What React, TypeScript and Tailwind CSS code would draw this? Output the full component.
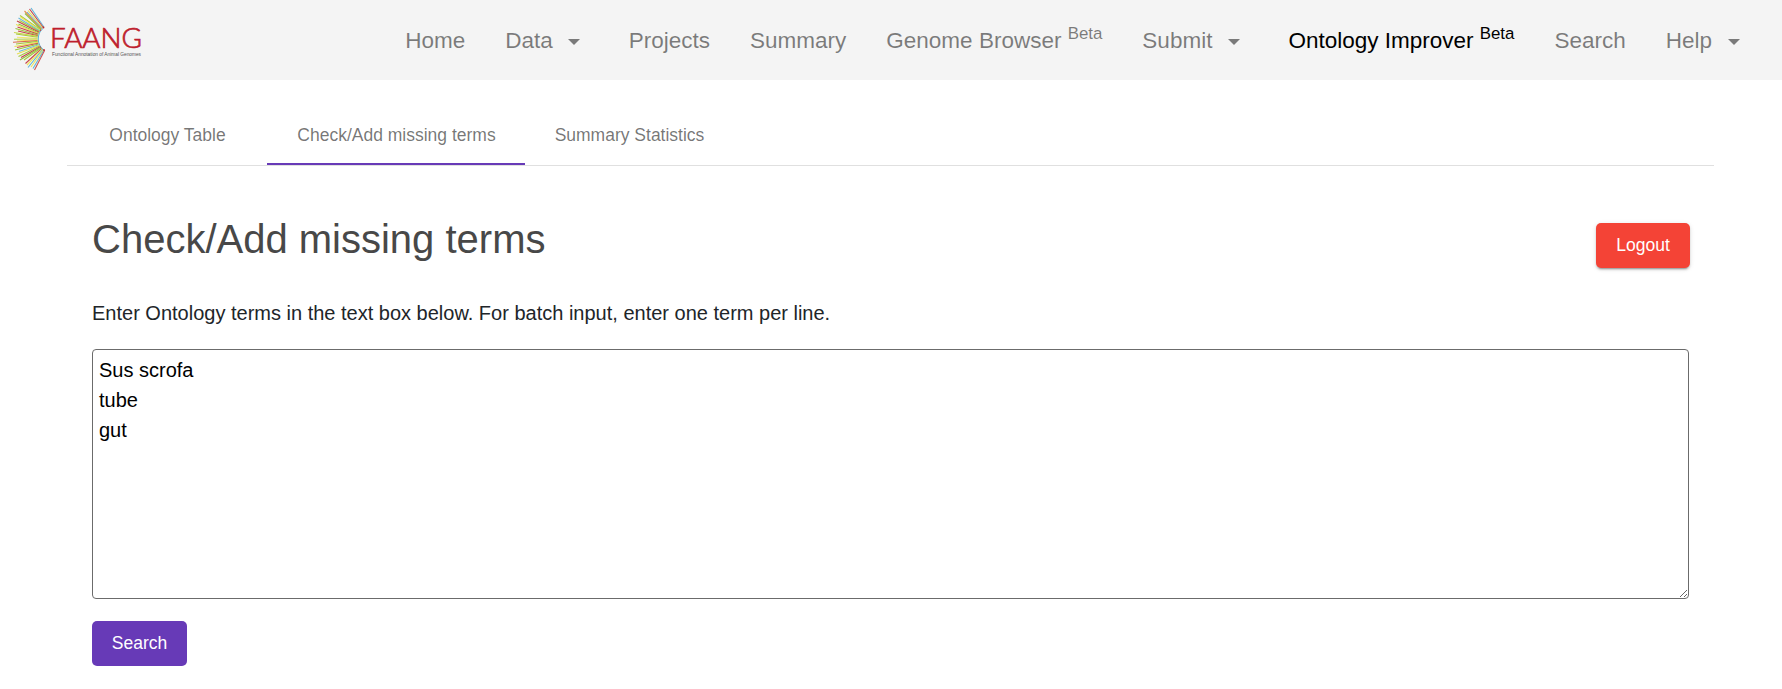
import React from "react";

type NavEntry = { label: string; beta?: boolean; menu?: boolean; active?: boolean };

const NAV: NavEntry[] = [
  { label: "Home" },
  { label: "Data", menu: true },
  { label: "Projects" },
  { label: "Summary" },
  { label: "Genome Browser", beta: true },
  { label: "Submit", menu: true },
  { label: "Ontology Improver", beta: true, active: true },
  { label: "Search" },
  { label: "Help", menu: true },
];

// Each ray: inner point, outer point, colour.
const RAYS: [number, number, number, number, string][] = [
  [44, 27.2, 31, 8, "#62b5d9"],
  [43.2, 27.5, 29.5, 9, "#c6434a"],
  [42.6, 28, 28, 10.5, "#e9e04f"],
  [42, 28.5, 27, 12, "#62b5d9"],
  [41.4, 29, 24.5, 11, "#e58c4f"],
  [41, 29.5, 25, 13.5, "#8fbf3f"],
  [40.8, 30, 20, 15.5, "#a5c93d"],
  [40.4, 30.5, 20.5, 17, "#f0e458"],
  [40, 31, 18.5, 18, "#6fb9dc"],
  [39.6, 31.5, 19.5, 20.5, "#a5c93d"],
  [39.2, 32.2, 17, 21, "#c6434a"],
  [38.8, 33, 18.5, 24, "#8fbf3f"],
  [38.5, 33.6, 16, 24.5, "#e9e04f"],
  [38.3, 34.2, 17.5, 27, "#c6434a"],
  [38, 35, 15.5, 28.5, "#9bc53b"],
  [37.8, 35.8, 18, 31, "#c6434a"],
  [37.7, 36.4, 14, 32.5, "#c9d84a"],
  [37.6, 37.2, 16, 34, "#a5c93d"],
  [37.5, 38.3, 17, 37.3, "#f2e66a"],
  [37.5, 39, 14, 39.2, "#b0ce45"],
  [37.5, 39.8, 17, 41, "#f0e458"],
  [37.6, 40.6, 13, 42.3, "#d96c52"],
  [37.7, 41.4, 16, 44, "#a5c93d"],
  [37.9, 42.4, 14.5, 46.5, "#e9e04f"],
  [38.2, 43.2, 17, 47.5, "#cb4e4e"],
  [38.5, 44, 15, 50, "#9bc53b"],
  [38.8, 44.7, 19, 51.5, "#6fb9dc"],
  [39.2, 45.4, 17, 54, "#e9e04f"],
  [39.7, 46, 18.5, 56.5, "#a5c93d"],
  [40.2, 46.7, 21, 57.5, "#c6434a"],
  [40.8, 47.3, 20, 60, "#8fbf3f"],
  [41.3, 47.8, 24, 60, "#a5c93d"],
  [41.8, 48.3, 25.5, 63.5, "#c6434a"],
  [42.3, 48.8, 27, 65, "#f0e458"],
  [42.9, 49.2, 28, 67.5, "#62b5d9"],
  [43.4, 49.6, 31, 67, "#f0e458"],
  [44, 50, 33, 68.5, "#62b5d9"],
  [44.7, 50.3, 34.5, 70, "#cb5553"],
];

function Logo() {
  return (
    <svg className="block h-20 w-[160px] shrink-0" viewBox="0 0 160 80" aria-label="FAANG">
      {RAYS.map(([x1, y1, x2, y2, c], i) => (
        <line key={i} x1={x1} y1={y1} x2={x2} y2={y2} stroke={c} strokeWidth={1.1} />
      ))}
      <path d="M43 28.5C36.6 33 36.6 45 43.5 49.8" fill="none" stroke="#58b2cf" strokeWidth="1" />
      <g fill="#c3202b">
        <circle cx="43.5" cy="27.5" r=".9" />
        <circle cx="40.6" cy="30.2" r=".6" />
        <circle cx="40.6" cy="47" r=".6" />
        <circle cx="44" cy="50" r=".9" />
      </g>
      <text x="50" y="48.3" fill="#be1e2d" stroke="#be1e2d" strokeWidth="0.7" fontFamily="Lato, sans-serif" fontWeight="300" fontSize="27" textLength="92" lengthAdjust="spacingAndGlyphs">
        FAANG
      </text>
      <text x="52" y="55.9" fill="#555" fontFamily="Liberation Sans, sans-serif" fontSize="5" textLength="89" lengthAdjust="spacingAndGlyphs">
        Functional Annotation of Animal Genomes
      </text>
    </svg>
  );
}

function Caret() {
  return (
    <svg className="ml-[15.5px] mr-[8.5px] mt-[2px] h-[6px] w-3" viewBox="0 0 12 6">
      <path d="M0 0h12L6 6z" fill="currentColor" />
    </svg>
  );
}

export default function App() {
  return (
    <div className="min-h-[689px] bg-white font-['Liberation_Sans',Arial,sans-serif] text-[20px] leading-[30px] text-[#212529]">
      <header className="flex h-20 items-center justify-between bg-[#f4f4f4] pr-[34px]">
        <Logo />
        <nav className="flex items-center gap-10 pt-[2px] text-[22.5px] leading-[34px]">
          {NAV.map((n) => (
            <a key={n.label} className={n.active ? "flex items-center whitespace-nowrap text-black" : "flex items-center whitespace-nowrap text-black/50"}>
              <span>
                {n.label}
                {n.beta && <> <sup className="top-[-0.55em] text-[16.875px] leading-none">Beta</sup></>}
              </span>
              {n.menu && <Caret />}
            </a>
          ))}
        </nav>
      </header>

      <main className="ml-[67px] w-[1647px] pt-[25px]">
        <div className="flex h-[61px] border-b border-black/12 text-[17.5px] text-black/55">
          <button className="w-[200px] border-b-2 border-transparent pl-px pt-[2px]">Ontology Table</button>
          <button className="w-[258px] border-b-2 border-[#673ab7] pl-px pt-[2px]">Check/Add missing terms</button>
          <button className="w-[209px] border-b-2 border-transparent pt-[2px]">Summary Statistics</button>
        </div>

        <section className="pl-[25px] pr-6 pt-[49px]">
          <div className="flex items-start justify-between">
            <h1 className="text-[40px] leading-[48px] text-[#484848]">Check/Add missing terms</h1>
            <button className="mt-2 h-[45px] w-[94px] rounded-[5px] bg-[#f44336] pb-px text-[17.5px] text-white shadow-[0_3px_1px_-2px_rgba(0,0,0,0.2),0_2px_2px_0_rgba(0,0,0,0.14),0_1px_5px_0_rgba(0,0,0,0.12)]">
              Logout
            </button>
          </div>
          <p className="mt-[30px]">
            Enter Ontology terms in the text box below. For batch input, enter one term per line.
          </p>
          <textarea
            className="mt-[21px] block h-[250px] w-[1597px] rounded-[4px] border border-[#6b6b6b] bg-white px-[6px] py-[5px] text-black"
            defaultValue={"Sus scrofa\ntube\ngut"}
          />
          <button className="mt-[22px] h-[45px] w-[95px] rounded-[5px] bg-[#673ab7] pb-px text-[17.5px] text-white">Search</button>
        </section>
      </main>
    </div>
  );
}
